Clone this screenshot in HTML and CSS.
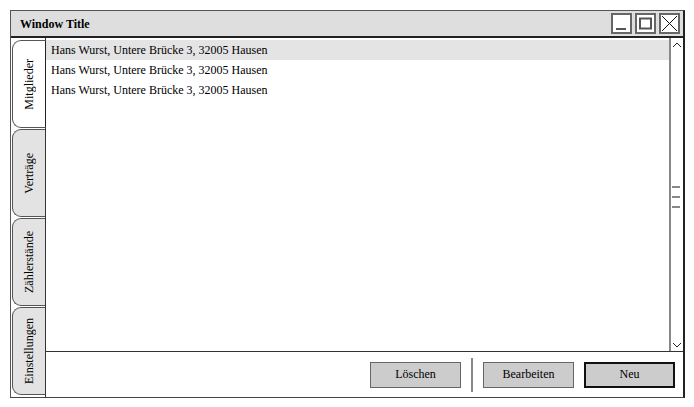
FILE: index.html
```html
<!DOCTYPE html>
<html>
<head>
<meta charset="utf-8">
<link rel="stylesheet" href="styles.css">
</head>
<body>
<div class="window">
  <div class="titlebar">
    <span class="title">Window Title</span>
    <div class="controls">
      <span class="ctl"><svg width="17" height="17" viewBox="0 0 17 17"><line x1="3" y1="14" x2="13" y2="14" stroke="#555" stroke-width="2"/></svg></span>
      <span class="ctl"><svg width="17" height="17" viewBox="0 0 17 17"><rect x="3" y="3.5" width="11" height="10" fill="none" stroke="#555" stroke-width="2"/></svg></span>
      <span class="ctl"><svg width="17" height="17" viewBox="0 0 17 17"><path d="M1 1 L16 16 M16 1 L1 16" stroke="#111" stroke-width="1"/></svg></span>
    </div>
  </div>
  <div class="main">
    <div class="tabs">
      <div class="tab active"><span>Mitglieder</span></div>
      <div class="tab"><span>Verträge</span></div>
      <div class="tab"><span>Zählerstände</span></div>
      <div class="tab"><span>Einstellungen</span></div>
    </div>
    <div class="panel">
      <div class="list">
        <div class="rows">
          <div class="row selected">Hans Wurst, Untere Brücke 3, 32005 Hausen</div>
          <div class="row">Hans Wurst, Untere Brücke 3, 32005 Hausen</div>
          <div class="row">Hans Wurst, Untere Brücke 3, 32005 Hausen</div>
        </div>
        <div class="scrollbar">
          <svg class="arrow" width="10" height="7" viewBox="0 0 10 7"><path d="M1 6 L5 2 L9 6" fill="none" stroke="#222" stroke-width="1"/></svg>
          <div class="thumb"><i></i><i></i><i></i></div>
          <svg class="arrow" width="10" height="7" viewBox="0 0 10 7"><path d="M1 1 L5 5 L9 1" fill="none" stroke="#222" stroke-width="1"/></svg>
        </div>
      </div>
      <div class="footer">
        <button class="btn">Löschen</button>
        <span class="sep"></span>
        <button class="btn">Bearbeiten</button>
        <button class="btn primary">Neu</button>
      </div>
    </div>
  </div>
</div>
</body>
</html>
```
FILE: styles.css
```css
* { box-sizing: border-box; }
body {
  margin: 0;
  background: #fff;
  font-family: "Liberation Serif", "Times New Roman", serif;
  font-size: 12px;
  color: #000;
}
.window {
  margin: 10px 0 0 10px;
  width: 675px;
  height: 388px;
  border: 1px solid #555;
  border-right: 2px solid #222;
  border-bottom: 1px solid #444;
  display: flex;
  flex-direction: column;
  background: #fff;
}
.titlebar {
  height: 27px;
  background: #dedede;
  border-bottom: 2px solid #222;
  display: flex;
  align-items: center;
  padding-left: 9px;
  padding-right: 3px;
}
.title {
  font-weight: bold;
  flex: 1;
  margin-top: 1px;
}
.controls {
  display: flex;
  gap: 3px;
}
.ctl {
  width: 21px;
  height: 21px;
  border: 2px solid #666;
  background: #fff;
  display: flex;
  align-items: center;
  justify-content: center;
}
.main {
  flex: 1;
  display: flex;
}
.tabs {
  width: 34px;
  padding: 2px 0 0 1px;
  display: flex;
  flex-direction: column;
  gap: 1px;
}
.tab {
  height: 88px;
  background: #e3e3e3;
  border: 1px solid #555;
  border-right: none;
  border-radius: 9px 0 0 9px;
  display: flex;
  align-items: center;
  justify-content: center;
}
.tab.active {
  background: #fff;
  border-right: 1px solid #222;
  margin-right: -1px;
  position: relative;
  z-index: 1;
}
.tab span {
  writing-mode: vertical-rl;
  transform: rotate(180deg);
  white-space: nowrap;
}
.panel {
  flex: 1;
  display: flex;
  flex-direction: column;
  border-left: 1px solid #333;
}
.list {
  flex: 1;
  display: flex;
}
.rows {
  flex: 1;
  padding-top: 2px;
}
.row {
  height: 20px;
  line-height: 20px;
  padding-left: 5px;
}
.row.selected {
  background: #e4e4e4;
}
.scrollbar {
  width: 14px;
  border-left: 2px solid #888;
  display: flex;
  flex-direction: column;
  align-items: center;
  justify-content: space-between;
  padding: 3px 0 2px;
}
.thumb {
  align-self: flex-start;
  display: flex;
  flex-direction: column;
  gap: 8px;
  margin: 4px 0 0 1px;
}
.thumb i {
  display: block;
  width: 8px;
  height: 2px;
  background: #888;
}
.footer {
  height: 46px;
  border-top: 1px solid #333;
  display: flex;
  align-items: center;
  justify-content: flex-end;
  padding-right: 8px;
  gap: 10px;
}
.btn {
  width: 91px;
  height: 26px;
  background: #cccccc;
  border: 1px solid #666;
  font-family: inherit;
  font-size: 12px;
  color: #000;
  padding: 0;
}
.btn.primary {
  border: 2px solid #111;
}
.sep {
  width: 2px;
  height: 34px;
  background: #888;
}
```
